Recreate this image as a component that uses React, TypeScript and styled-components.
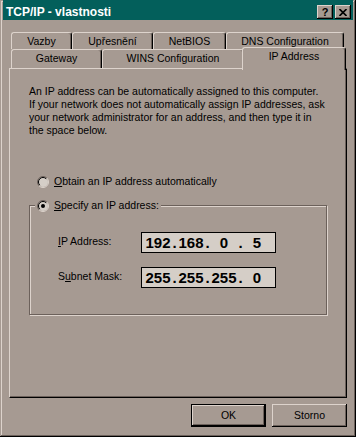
import React from "react";
import styled, { createGlobalStyle } from "styled-components";

const c = {
  face: "#a69a92",
  light: "#ddd3cc",
  shadow: "#6c615b",
  black: "#000",
  field: "#d5cec7",
  title: "#035f5b",
};

const GlobalStyle = createGlobalStyle`
  html, body {
    margin: 0;
    padding: 0;
    background: ${c.face};
  }
  body {
    font-family: "Liberation Sans", Arial, sans-serif;
    font-size: 10.5px;
    color: #000;
  }
  * {
    box-sizing: border-box;
  }
`;

const Window = styled.div`
  width: 356px;
  height: 437px;
  display: flex;
  flex-direction: column;
  padding: 0 3px 3px 3px;
  background: ${c.face};
  box-shadow: inset -1px -1px 0 ${c.black}, inset 1px 1px 0 ${c.face},
    inset -2px -2px 0 ${c.shadow}, inset 2px 2px 0 ${c.light};
`;

const TitleBar = styled.div`
  flex: none;
  height: 20px;
  display: flex;
  align-items: center;
  padding: 4px 2px 0 3px;
  background: ${c.title};
`;

const TitleText = styled.div`
  flex: 1;
  color: #fff;
  font-weight: bold;
  font-size: 12px;
  white-space: nowrap;
`;

const CaptionButton = styled.div<{ $gap?: number }>`
  width: 16px;
  height: 14px;
  margin-left: ${(p) => p.$gap ?? 0}px;
  display: flex;
  align-items: center;
  justify-content: center;
  background: ${c.face};
  font-weight: bold;
  font-size: 11px;
  line-height: 11px;
  box-shadow: inset -1px -1px 0 ${c.black}, inset 1px 1px 0 ${c.light},
    inset -2px -2px 0 ${c.shadow};
`;

const Body = styled.div`
  flex: 1;
  display: flex;
  flex-direction: column;
  padding: 12px 6px 0 6px;
`;

const TabRows = styled.div`
  display: flex;
  flex-direction: column;
  padding-left: 2px;
`;

const TabRow = styled.div<{ $front?: boolean }>`
  display: flex;
  align-items: flex-end;
  height: ${(p) => (p.$front ? 19 : 17)}px;
  position: relative;
  z-index: ${(p) => (p.$front ? 2 : 1)};
`;

const Tab = styled.div<{ $w: number; $h: number; $active?: boolean }>`
  flex: none;
  width: ${(p) => (p.$active ? p.$w + 4 : p.$w)}px;
  height: ${(p) => (p.$active ? p.$h + 4 : p.$h)}px;
  margin: ${(p) => (p.$active ? "0 -2px -2px -2px" : "0")};
  padding-top: 2px;
  background: ${c.face};
  border-top: 1px solid ${c.light};
  border-left: 1px solid ${c.light};
  border-right: 1px solid ${c.black};
  border-radius: 3px 3px 0 0;
  box-shadow: inset -1px 0 0 ${c.shadow};
  text-align: center;
  line-height: 13px;
  white-space: nowrap;
`;

const Panel = styled.div`
  flex: 1;
  display: flex;
  flex-direction: column;
  padding: 16px 19px 0 19px;
  border-top: 1px solid ${c.light};
  border-left: 1px solid ${c.light};
  border-right: 1px solid ${c.black};
  border-bottom: 1px solid ${c.black};
  box-shadow: inset -1px -1px 0 ${c.shadow};
`;

const Intro = styled.p`
  margin: 0;
  line-height: 13px;
  white-space: nowrap;
`;

const RadioRow = styled.label<{ $top?: number }>`
  display: flex;
  align-items: center;
  gap: 5px;
  height: 13px;
  line-height: 13px;
  margin-top: ${(p) => p.$top ?? 0}px;
  padding-left: 8px;
  white-space: nowrap;
`;

const Key = styled.span`
  text-decoration: underline;
  text-underline-offset: 1px;
`;

const GroupBox = styled.div`
  position: relative;
  margin-top: 17px;
  padding: 26px 0 26px 28px;
  border: 1px solid ${c.shadow};
  box-shadow: inset 1px 1px 0 ${c.light}, 1px 1px 0 ${c.light};
  display: grid;
  grid-template-columns: 83px 135px;
  row-gap: 14px;
  align-items: start;
`;

const Legend = styled.div`
  position: absolute;
  top: -7px;
  left: 5px;
  padding: 0 2px;
  background: ${c.face};
`;

const FieldLabel = styled.div`
  padding-top: 3px;
  line-height: 13px;
  white-space: nowrap;
`;

const IpField = styled.div`
  height: 21px;
  display: flex;
  padding-left: 3px;
  background: ${c.field};
  border: 1px solid ${c.black};
  font-weight: bold;
  font-size: 15px;
  line-height: 19px;
`;

const Octet = styled.span`
  width: 26px;
  text-align: center;
`;

const Dot = styled.span`
  width: 7px;
  text-align: center;
`;

const ButtonBar = styled.div`
  flex: none;
  display: flex;
  justify-content: flex-end;
  gap: 6px;
  padding: 6px 0 7px 0;
`;

const Button = styled.button<{ $default?: boolean }>`
  width: 75px;
  height: 23px;
  padding: 0;
  font-family: inherit;
  font-size: 10.5px;
  line-height: 13px;
  color: #000;
  background: ${c.face};
  border: ${(p) => (p.$default ? `1px solid ${c.black}` : "none")};
  box-shadow: inset -1px -1px 0 ${c.black}, inset 1px 1px 0 ${c.light},
    inset -2px -2px 0 ${c.shadow};
`;

function Radio({ checked }: { checked?: boolean }) {
  return (
    <svg width="12" height="12" viewBox="0 0 12 12">
      <circle cx="6" cy="6" r="5" fill={c.field} />
      <path d="M2.1 9.9 A5.5 5.5 0 0 1 9.9 2.1" stroke={c.shadow} fill="none" />
      <path d="M9.9 2.1 A5.5 5.5 0 0 1 2.1 9.9" stroke={c.light} fill="none" />
      <path d="M2.8 9.2 A4.5 4.5 0 0 1 9.2 2.8" stroke="#000" fill="none" />
      {checked && <circle cx="6" cy="6" r="2" fill="#000" />}
    </svg>
  );
}

function IpAddress({ value }: { value: string[] }) {
  return (
    <IpField>
      {value.map((part, i) => (
        <React.Fragment key={i}>
          <Octet>{part}</Octet>
          {i < 3 && <Dot>.</Dot>}
        </React.Fragment>
      ))}
    </IpField>
  );
}

const backTabs = [
  { label: "Vazby", w: 61 },
  { label: "Upřesnění", w: 81 },
  { label: "NetBIOS", w: 73 },
  { label: "DNS Configuration", w: 118 },
];

const frontTabs = [
  { label: "Gateway", w: 91 },
  { label: "WINS Configuration", w: 142 },
  { label: "IP Address", w: 100, active: true },
];

export default function App() {
  return (
    <>
      <GlobalStyle />
      <Window>
        <TitleBar>
          <TitleText>TCP/IP - vlastnosti</TitleText>
          <CaptionButton>?</CaptionButton>
          <CaptionButton $gap={2}>
            <svg width="8" height="7" viewBox="0 0 8 7">
              <path d="M0.5 0 L7.5 7 M7.5 0 L0.5 7" stroke="#000" strokeWidth="1.6" />
            </svg>
          </CaptionButton>
        </TitleBar>
        <Body>
          <TabRows>
            <TabRow>
              {backTabs.map((t) => (
                <Tab key={t.label} $w={t.w} $h={17}>
                  {t.label}
                </Tab>
              ))}
            </TabRow>
            <TabRow $front>
              {frontTabs.map((t) => (
                <Tab key={t.label} $w={t.w} $h={19} $active={t.active}>
                  {t.label}
                </Tab>
              ))}
            </TabRow>
          </TabRows>
          <Panel>
            <Intro>
              An IP address can be automatically assigned to this computer.
              <br />
              If your network does not automatically assign IP addresses, ask
              <br />
              your network administrator for an address, and then type it in
              <br />
              the space below.
            </Intro>
            <RadioRow $top={38}>
              <Radio />
              <span>
                <Key>O</Key>btain an IP address automatically
              </span>
            </RadioRow>
            <GroupBox>
              <Legend>
                <RadioRow style={{ paddingLeft: 0 }}>
                  <Radio checked />
                  <span>
                    <Key>S</Key>pecify an IP address:
                  </span>
                </RadioRow>
              </Legend>
              <FieldLabel>
                <Key>I</Key>P Address:
              </FieldLabel>
              <IpAddress value={["192", "168", "0", "5"]} />
              <FieldLabel>
                S<Key>u</Key>bnet Mask:
              </FieldLabel>
              <IpAddress value={["255", "255", "255", "0"]} />
            </GroupBox>
          </Panel>
          <ButtonBar>
            <Button $default>OK</Button>
            <Button>Storno</Button>
          </ButtonBar>
        </Body>
      </Window>
    </>
  );
}
